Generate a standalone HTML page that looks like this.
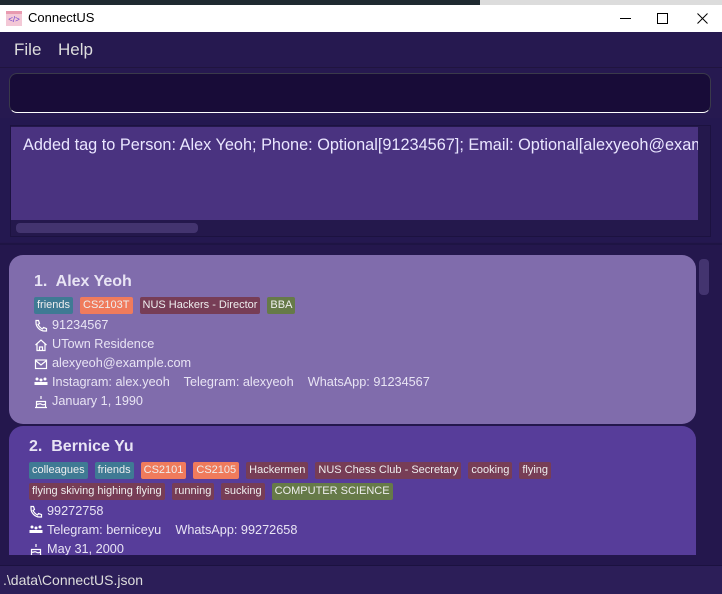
<!DOCTYPE html>
<html><head><meta charset="utf-8"><style>
*{margin:0;padding:0;box-sizing:border-box}
body{width:722px;height:594px;overflow:hidden;background:#24174d;font-family:"Liberation Sans",sans-serif;position:relative;color:#e8e4f4}
.a{position:absolute}
.tag{display:inline-block;font-size:11px;line-height:17px;height:17px;padding:0 3px;border-radius:2px;margin-right:7px;color:#eee}
.t{background:#3f7a94}.o{background:#f07b5c}.m{background:#773d56}.g{background:#667a48}
.line{font-size:12.7px;height:19px;line-height:19px;white-space:nowrap;display:flex;align-items:center}
.line svg{margin-right:4px;flex:none}
.name{font-size:16px;font-weight:bold;height:26px;line-height:26px}
</style></head><body>
<div class="a" style="left:0;top:0;width:480px;height:5px;background:#1f2a30"></div>
<div class="a" style="left:480px;top:0;width:242px;height:5px;background:#dcdcdc"></div>
<div class="a" style="left:0;top:5px;width:722px;height:27px;background:#fff;color:#000">
 <div class="a" style="left:6px;top:6px;width:16px;height:15px;background:#f3c8d6;border-top:3px solid #e89ab0;font-size:8px;color:#6a3fd0;text-align:center;line-height:11px">&lt;/&gt;</div>
 <div class="a" style="left:28px;top:5px;font-size:13px">ConnectUS</div>
 <div class="a" style="left:620px;top:13px;width:11px;height:1px;background:#000"></div>
 <div class="a" style="left:657px;top:8px;width:11px;height:11px;border:1px solid #000"></div>
 <svg class="a" style="left:697px;top:8px" width="11" height="11" viewBox="0 0 11 11" stroke="#000" stroke-width="1"><path d="M0.5 0.5l10 10M10.5 0.5l-10 10"/></svg>
</div>
<div class="a" style="left:0;top:32px;width:722px;height:36px;background:#261950;border-bottom:1px solid #20143f">
 <div class="a" style="left:14px;top:8px;font-size:17px;color:#ddd">File</div>
 <div class="a" style="left:58px;top:8px;font-size:17px;color:#ddd">Help</div>
</div>
<div class="a" style="left:0;top:68px;width:722px;height:50px;background:#261950"></div>
<div class="a" style="left:9px;top:73px;width:702px;height:40px;background:#180c38;border-radius:8px;border:1px solid #3a3a4a;border-bottom:1px solid #fff"></div>
<div class="a" style="left:0;top:118px;width:722px;height:124px;background:#241850"></div>
<div class="a" style="left:10px;top:125px;width:701px;height:112px;background:#24184c;border:1px solid #1c1240"></div>
<div class="a" style="left:11px;top:127px;width:687px;height:93px;background:#4a3380;overflow:hidden">
 <div class="a" style="left:12px;top:9px;font-size:16.3px;white-space:nowrap;color:#eae6ff">Added tag to Person: Alex Yeoh; Phone: Optional[91234567]; Email: Optional[alexyeoh@examp</div>
</div>
<div class="a" style="left:16px;top:223px;width:182px;height:10px;background:#43346f;border-radius:4px"></div>
<div class="a" style="left:0;top:243px;width:722px;height:2px;background:#1e1444"></div>
<div class="a" style="left:699px;top:259px;width:10px;height:36px;background:#43346f;border-radius:4px"></div>

<div class="a" style="left:9px;top:255px;width:687px;height:169px;background:#806cac;border-radius:14px;padding:14px 0 0 25px">
 <div class="name">1.&nbsp; Alex Yeoh</div>
 <div style="height:21px;margin-left:0"><span class="tag t">friends</span><span class="tag o">CS2103T</span><span class="tag m">NUS Hackers - Director</span><span class="tag g">BBA</span></div>
 <div class="line"><svg width="14" height="14" viewBox="0 0 14 14" fill="none" stroke="#fff" stroke-width="1.2"><path d="M2 1.5l2.5 0 1 3-1.5 1c1 2 2.5 3.5 4.5 4.5l1-1.5 3 1v2.5h-2C6 12 2 8 2 3.5z"/></svg>91234567</div>
 <div class="line"><svg width="14" height="14" viewBox="0 0 14 14" fill="none" stroke="#fff" stroke-width="1.2"><path d="M1.5 7L7 2l5.5 5M3 6v6.5h8V6M5.5 12.5V9h3v3.5"/></svg>UTown Residence</div>
 <div class="line"><svg width="14" height="14" viewBox="0 0 14 14" fill="none" stroke="#fff" stroke-width="1.2"><rect x="1.5" y="3" width="11" height="8.5"/><path d="M1.5 3.5L7 8l5.5-4.5"/></svg>alexyeoh@example.com</div>
 <div class="line"><svg width="14" height="14" viewBox="0 0 14 14" fill="#fff"><circle cx="3" cy="3" r="1.5"/><circle cx="7" cy="4" r="1.5"/><circle cx="11" cy="3" r="1.5"/><rect x="0.5" y="6" width="13" height="3"/></svg>Instagram: alex.yeoh &nbsp;&nbsp; Telegram: alexyeoh &nbsp;&nbsp; WhatsApp: 91234567</div>
 <div class="line"><svg width="14" height="14" viewBox="0 0 14 14" fill="none" stroke="#fff" stroke-width="1.2"><path d="M7 1v3M2.5 6.5h9v6h-9zM1 12.5h12M2.5 9c1.5 1 3 -1 4.5 0s3 1 4.5 0"/></svg>January 1, 1990</div>
</div>

<div class="a" style="left:9px;top:426px;width:687px;height:129px;background:#573d9a;border-radius:14px 14px 0 0;padding:8px 0 0 20px;overflow:hidden">
 <div class="name">2.&nbsp; Bernice Yu</div>
 <div style="height:21px"><span class="tag t">colleagues</span><span class="tag t">friends</span><span class="tag o">CS2101</span><span class="tag o">CS2105</span><span class="tag m">Hackermen</span><span class="tag m">NUS Chess Club - Secretary</span><span class="tag m">cooking</span><span class="tag m">flying</span></div>
 <div style="height:21px"><span class="tag m">flying skiving highing flying</span><span class="tag m">running</span><span class="tag m">sucking</span><span class="tag g">COMPUTER SCIENCE</span></div>
 <div class="line"><svg width="14" height="14" viewBox="0 0 14 14" fill="none" stroke="#fff" stroke-width="1.2"><path d="M2 1.5l2.5 0 1 3-1.5 1c1 2 2.5 3.5 4.5 4.5l1-1.5 3 1v2.5h-2C6 12 2 8 2 3.5z"/></svg>99272758</div>
 <div class="line"><svg width="14" height="14" viewBox="0 0 14 14" fill="#fff"><circle cx="3" cy="3" r="1.5"/><circle cx="7" cy="4" r="1.5"/><circle cx="11" cy="3" r="1.5"/><rect x="0.5" y="6" width="13" height="3"/></svg>Telegram: berniceyu &nbsp;&nbsp; WhatsApp: 99272658</div>
 <div class="line"><svg width="14" height="14" viewBox="0 0 14 14" fill="none" stroke="#fff" stroke-width="1.2"><path d="M7 1v3M2.5 6.5h9v6h-9zM1 12.5h12M2.5 9c1.5 1 3 -1 4.5 0s3 1 4.5 0"/></svg>May 31, 2000</div>
</div>

<div class="a" style="left:0;top:565px;width:722px;height:1px;background:#1c1240"></div>
<div class="a" style="left:0;top:566px;width:722px;height:28px;background:#2c1e58">
 <div class="a" style="left:3px;top:6px;font-size:14px;color:#ddd">.\data\ConnectUS.json</div>
</div>
</body></html>
